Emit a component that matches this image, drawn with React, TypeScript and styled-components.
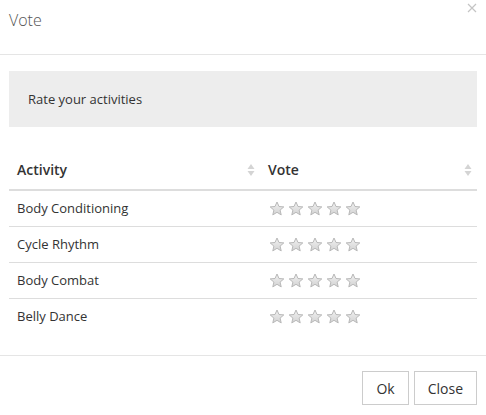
import React from 'react'
import styled, { createGlobalStyle } from 'styled-components'

const GlobalStyle = createGlobalStyle`
  html, body {
    margin: 0;
    padding: 0;
    background: #fff;
  }
  body {
    font-family: 'Open Sans', 'Liberation Sans', sans-serif;
    color: #333;
  }
`

const activities = ['Body Conditioning', 'Cycle Rhythm', 'Body Combat', 'Belly Dance']

const Modal = styled.div`
  width: 486px;
  height: 415px;
  display: flex;
  flex-direction: column;
  box-sizing: border-box;
  position: relative;
`

const Header = styled.div`
  height: 55px;
  box-sizing: border-box;
  padding: 9px 9px 0;
  border-bottom: 1px solid #e5e5e5;
`

const Title = styled.h4`
  margin: 0;
  font-size: 16px;
  line-height: 22px;
  font-weight: 300;
  color: #555;
`

const CloseX = styled.button`
  position: absolute;
  top: 1px;
  right: 8px;
  border: 0;
  background: none;
  padding: 0;
  width: 12px;
  height: 14px;
  cursor: pointer;
  display: flex;
  align-items: center;
  justify-content: center;
`

const Body = styled.div`
  padding: 16px 9px 21px;
`

const Panel = styled.div`
  height: 56px;
  background: #ededed;
  display: flex;
  align-items: center;
  padding: 0 19px;
  font-size: 13px;
  color: #333;
`

const Table = styled.table`
  width: 100%;
  margin-top: 24px;
  border-collapse: collapse;
  font-size: 13px;
  table-layout: fixed;
`

const Th = styled.th<{ $width?: number }>`
  box-sizing: border-box;
  text-align: left;
  font-weight: 600;
  font-size: 14px;
  line-height: 18px;
  padding: 10px 8px;
  border-bottom: 2px solid #ddd;
  color: #333;
  width: ${({ $width }) => ($width ? `${$width}px` : 'auto')};
  position: relative;
`

const SortIcon = styled.span`
  position: absolute;
  right: 5px;
  top: 50%;
  transform: translateY(-50%);
  display: flex;
`

const Row = styled.tr<{ $last?: boolean }>`
  border-bottom: ${({ $last }) => ($last ? 'none' : '1px solid #ddd')};
`

const Td = styled.td`
  padding: 8px;
  line-height: 19px;
  color: #333;
`

const Stars = styled.div`
  display: flex;
  gap: 3px;
  padding-left: 1px;
  height: 19px;
  align-items: center;
`

const Footer = styled.div`
  border-top: 1px solid #e5e5e5;
  padding: 15px 9px 0;
  display: flex;
  justify-content: flex-end;
  gap: 5px;
`

const Button = styled.button`
  height: 34px;
  padding: 0 13px;
  font-family: 'Open Sans', 'Liberation Sans', sans-serif;
  font-size: 14px;
  color: #333;
  background: #fff;
  border: 1px solid #ccc;
  border-radius: 0;
  cursor: pointer;
`

const Star: React.FC<{ id: string }> = ({ id }) => (
  <svg width="16" height="16" viewBox="0 0 16 16">
    <defs>
      <linearGradient id={id} x1="0" y1="0" x2="0" y2="1">
        <stop offset="0" stopColor="#f2f2f2" />
        <stop offset="1" stopColor="#d2d2d2" />
      </linearGradient>
    </defs>
    <path
      d="M8 1 L10 5.5 L14.8 5.9 L11.1 9.1 L12.2 13.9 L8 11.3 L3.8 13.9 L4.9 9.1 L1.2 5.9 L6 5.5 Z"
      fill={`url(#${id})`}
      stroke="#b8b8b8"
      strokeWidth="1"
      strokeLinejoin="round"
    />
  </svg>
)

const Sorter = () => (
  <svg width="8" height="14" viewBox="0 0 8 14">
    <path d="M4 1 L7.5 6 L0.5 6 Z" fill="#d4d4d4" />
    <path d="M4 13 L7.5 8 L0.5 8 Z" fill="#d4d4d4" />
  </svg>
)

export default function App() {
  return (
    <>
      <GlobalStyle />
      <Modal>
        <Header>
          <Title>Vote</Title>
        </Header>
        <CloseX aria-label="Close">
          <svg width="10" height="10" viewBox="0 0 10 10">
            <path d="M1 1 L9 9 M9 1 L1 9" stroke="#c4c4c4" strokeWidth="1.2" />
          </svg>
        </CloseX>
        <Body>
          <Panel>Rate your activities</Panel>
          <Table>
            <thead>
              <tr>
                <Th $width={251}>
                  Activity
                  <SortIcon>
                    <Sorter />
                  </SortIcon>
                </Th>
                <Th>
                  Vote
                  <SortIcon>
                    <Sorter />
                  </SortIcon>
                </Th>
              </tr>
            </thead>
            <tbody>
              {activities.map((name, i) => (
                <Row key={name} $last={i === activities.length - 1}>
                  <Td>{name}</Td>
                  <Td>
                    <Stars>
                      {[0, 1, 2, 3, 4].map((s) => (
                        <Star key={s} id={`g-${i}-${s}`} />
                      ))}
                    </Stars>
                  </Td>
                </Row>
              ))}
            </tbody>
          </Table>
        </Body>
        <Footer>
          <Button>Ok</Button>
          <Button>Close</Button>
        </Footer>
      </Modal>
    </>
  )
}
